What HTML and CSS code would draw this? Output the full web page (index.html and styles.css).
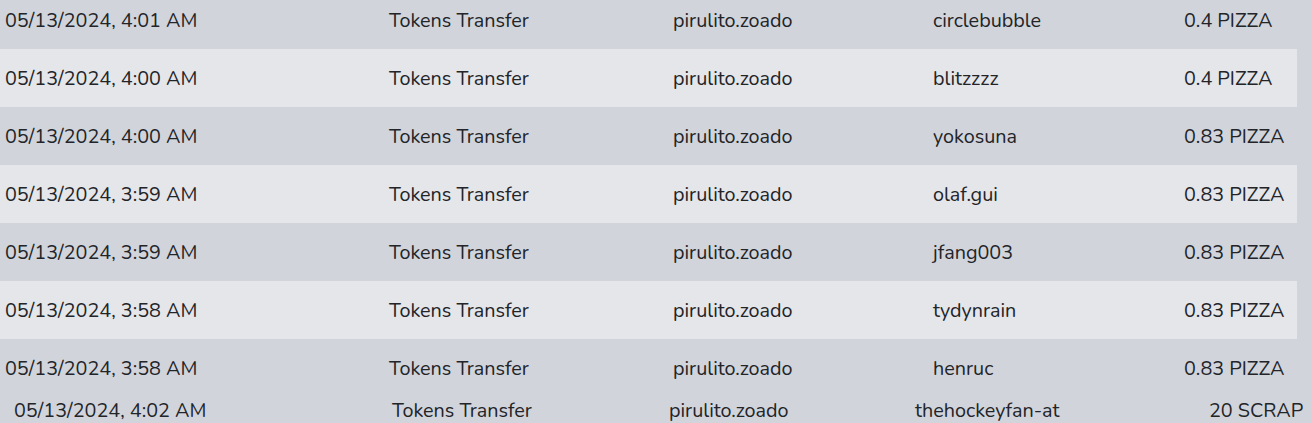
FILE: index.html
```html
<!DOCTYPE html>
<html lang="en">
<head>
    <meta charset="UTF-8">
    <meta name="viewport" content="width=device-width, initial-scale=1.0">
    <title>Transfers</title>
    <link rel="stylesheet" href="styles.css">
</head>
<body>
    <div class="history">
        <div class="rows">
            <div class="row">
                <span>05/13/2024, 4:01 AM</span>
                <span>Tokens Transfer</span>
                <span>pirulito.zoado</span>
                <span>circlebubble</span>
                <span>0.4 PIZZA</span>
            </div>
            <div class="row">
                <span>05/13/2024, 4:00 AM</span>
                <span>Tokens Transfer</span>
                <span>pirulito.zoado</span>
                <span>blitzzzz</span>
                <span>0.4 PIZZA</span>
            </div>
            <div class="row">
                <span>05/13/2024, 4:00 AM</span>
                <span>Tokens Transfer</span>
                <span>pirulito.zoado</span>
                <span>yokosuna</span>
                <span>0.83 PIZZA</span>
            </div>
            <div class="row">
                <span>05/13/2024, 3:59 AM</span>
                <span>Tokens Transfer</span>
                <span>pirulito.zoado</span>
                <span>olaf.gui</span>
                <span>0.83 PIZZA</span>
            </div>
            <div class="row">
                <span>05/13/2024, 3:59 AM</span>
                <span>Tokens Transfer</span>
                <span>pirulito.zoado</span>
                <span>jfang003</span>
                <span>0.83 PIZZA</span>
            </div>
            <div class="row">
                <span>05/13/2024, 3:58 AM</span>
                <span>Tokens Transfer</span>
                <span>pirulito.zoado</span>
                <span>tydynrain</span>
                <span>0.83 PIZZA</span>
            </div>
            <div class="row">
                <span>05/13/2024, 3:58 AM</span>
                <span>Tokens Transfer</span>
                <span>pirulito.zoado</span>
                <span>henruc</span>
                <span>0.83 PIZZA</span>
            </div>
        </div>

        <div class="row-other">
            <span>05/13/2024, 4:02 AM</span>
            <span>Tokens Transfer</span>
            <span>pirulito.zoado</span>
            <span>thehockeyfan-at</span>
            <span>20 SCRAP</span>
        </div>
    </div>
</body>
</html>
```

FILE: styles.css
```css
body {
    margin: 0;
    font-family: 'Nunito', 'Lato', sans-serif;
    font-size: 19.8px;
    color: #222428;
    background-color: #d1d4db;
    overflow: hidden;
}

.history {
    width: 1311px;
    height: 423px;
    overflow: hidden;
    background-color: #d1d4db;
}

.rows {
    width: 1297px;
    margin-top: -9px;
}

.row {
    display: grid;
    grid-template-columns: 384px 284px 260px 251px 1fr;
    align-items: center;
    height: 58px;
    padding-left: 5px;
    white-space: nowrap;
}

.row:nth-child(even) {
    background-color: #e5e6ea;
}

.row-other {
    display: grid;
    grid-template-columns: 378px 277px 246px 294px 1fr;
    align-items: center;
    height: 26px;
    padding-left: 14px;
    white-space: nowrap;
}
```
